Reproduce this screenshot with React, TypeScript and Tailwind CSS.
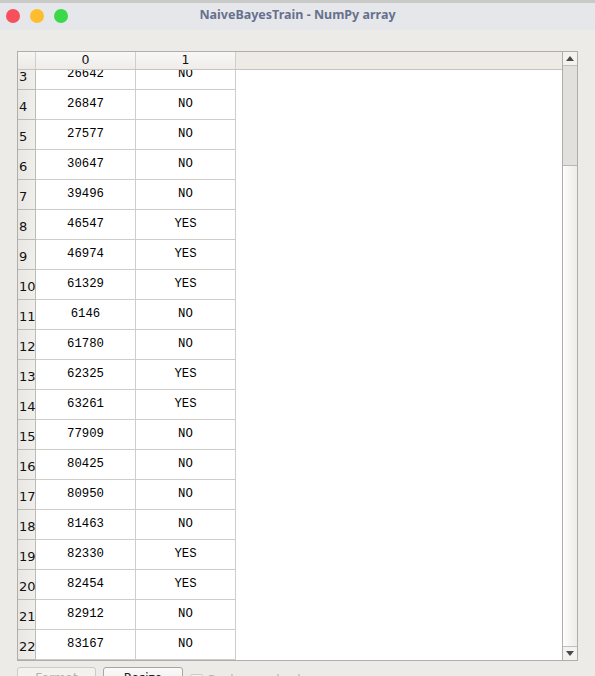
import React from "react";

const rows: [number, string, string][] = [
  [3, "26642", "NO"],
  [4, "26847", "NO"],
  [5, "27577", "NO"],
  [6, "30647", "NO"],
  [7, "39496", "NO"],
  [8, "46547", "YES"],
  [9, "46974", "YES"],
  [10, "61329", "YES"],
  [11, "6146", "NO"],
  [12, "61780", "NO"],
  [13, "62325", "YES"],
  [14, "63261", "YES"],
  [15, "77909", "NO"],
  [16, "80425", "NO"],
  [17, "80950", "NO"],
  [18, "81463", "NO"],
  [19, "82330", "YES"],
  [20, "82454", "YES"],
  [21, "82912", "NO"],
  [22, "83167", "NO"],
];

export default function App() {
  return (
    <div className="w-[595px] h-[676px] overflow-hidden bg-[#edebe7] flex flex-col" style={{ fontFamily: '"DejaVu Sans", sans-serif' }}>
      {/* title bar */}
      <div className="h-[30px] shrink-0 border-t-[3px] border-[#c9cac8] bg-[#e6e7eb] relative flex items-center justify-center">
        <div className="absolute left-[6px] top-[6px] flex gap-[10px]">
          <div className="w-[14px] h-[14px] rounded-full bg-[#f5505b]" />
          <div className="w-[14px] h-[14px] rounded-full bg-[#fcbe2f]" />
          <div className="w-[14px] h-[14px] rounded-full bg-[#3ad94a]" />
        </div>
        <span className="text-[12.5px] font-bold text-[#67718d] -mt-[2px]" style={{ fontFamily: '"Noto Sans", sans-serif' }}>
          NaiveBayesTrain - NumPy array
        </span>
      </div>

      {/* body */}
      <div className="pl-[17px] pt-[21px] flex-1 flex flex-col">
        <div className="w-[561px] h-[610px] border border-[#b0aeab] flex bg-white">
          <div className="flex-1 flex flex-col overflow-hidden">
            {/* header */}
            <div className="h-[18px] shrink-0 flex border-b border-[#c6c4c1] bg-[#eeebe7]">
              <div className="w-[18px] border-r border-[#d0cecb] bg-gradient-to-b from-[#f7f6f4] to-[#ece9e5]" />
              <div className="w-[100px] border-r border-[#d0cecb] bg-gradient-to-b from-[#f9f8f7] to-[#efece9] flex items-center justify-center text-[12.5px] text-[#111] leading-none">0</div>
              <div className="w-[100px] border-r border-[#d0cecb] bg-gradient-to-b from-[#f9f8f7] to-[#efece9] flex items-center justify-center text-[12.5px] text-[#111] leading-none">1</div>
              <div className="flex-1" />
            </div>
            {/* body rows */}
            <div className="flex-1 overflow-hidden">
              <div className="-mt-[10px]">
                {rows.map(([i, a, b]) => (
                  <div key={i} className="h-[30px] flex">
                    <div className="w-[18px] border-r border-b border-[#bdbbb8] bg-gradient-to-r from-[#e9e7e3] to-[#f1efec] flex items-center pl-[1px] pt-[3px] text-[13px] text-[#111] leading-none">
                      {i}
                    </div>
                    <div className="w-[100px] border-r border-b border-[#cfcdca] flex items-center justify-center pb-[1px] text-[12.3px] text-[#000] leading-none" style={{ fontFamily: '"Liberation Mono", monospace' }}>
                      {a}
                    </div>
                    <div className="w-[100px] border-r border-b border-[#cfcdca] flex items-center justify-center pb-[1px] text-[12.3px] text-[#000] leading-none" style={{ fontFamily: '"Liberation Mono", monospace' }}>
                      {b}
                    </div>
                    <div className="flex-1" />
                  </div>
                ))}
              </div>
            </div>
          </div>
          {/* scrollbar */}
          <div className="w-[15px] shrink-0 border-l border-[#b0aeab] flex flex-col bg-gradient-to-r from-[#fdfdfc] to-[#eeece9]">
            <div className="h-[14px] border-b border-[#c2c0bd] bg-[#f4f2ef] flex items-center justify-center">
              <svg width="8" height="5" viewBox="0 0 8 5"><path d="M0 5 L4 0 L8 5 Z" fill="#4a4a4a" /></svg>
            </div>
            <div className="h-[100px] border-b border-[#b9b7b4] bg-[#e1e0dd]" />
            <div className="flex-1" />
            <div className="h-[14px] border-t border-[#c2c0bd] bg-[#f4f2ef] flex items-center justify-center">
              <svg width="8" height="5" viewBox="0 0 8 5"><path d="M0 0 L8 0 L4 5 Z" fill="#4a4a4a" /></svg>
            </div>
          </div>
        </div>

        {/* bottom controls */}
        <div className="flex items-start gap-[7px] mt-[6px]">
          <div className="w-[79px] h-[22px] border border-[#cdcbc8] rounded-[3px] bg-[#f3f2ef] flex items-center justify-center text-[12px] text-[#b5b3b0]">
            Format
          </div>
          <div className="w-[80px] h-[22px] border border-[#a8a6a3] rounded-[3px] bg-gradient-to-b from-[#fbfaf9] to-[#ecebe8] flex items-center justify-center text-[12px] text-[#222]">
            Resize
          </div>
          <div className="flex items-center gap-[5px] pt-[4px]">
            <div className="w-[13px] h-[13px] border border-[#cdcbc8] rounded-[2px] bg-[#f3f2ef]" />
            <span className="text-[12px] text-[#b5b3b0]">Background color</span>
          </div>
        </div>
      </div>
    </div>
  );
}
